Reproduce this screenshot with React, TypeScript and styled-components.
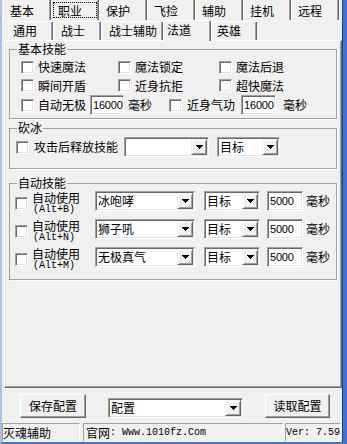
import React from 'react';
import styled, { createGlobalStyle, css } from 'styled-components';

const CJK = `"Noto Sans CJK SC", "Noto Sans CJK JP", sans-serif`;
const MONO = `"Liberation Mono", "DejaVu Sans Mono", monospace`;
const SANS = `"Liberation Sans", Arial, sans-serif`;

const GlobalStyle = createGlobalStyle`
  html, body { margin: 0; padding: 0; background: #f0f0f0; }
  body { font-family: ${CJK}; font-size: 12px; color: #000; }
  *, *::before, *::after { box-sizing: border-box; }
`;

const Window = styled.div`
  width: 347px;
  height: 444px;
  background: #f0f0f0;
  border-left: 2px solid #a9c2ec;
  border-right: 4px solid #3f73d9;
  border-bottom: 2px solid #3f73d9;
  box-shadow: inset -1px 0 0 #1c3f8c;
  display: flex;
  flex-direction: column;
  font-family: ${CJK};
  font-size: 12px;
  line-height: 12px;
  overflow: hidden;
`;

const TopTabs = styled.div`
  display: flex;
  height: 20px;
  padding-left: 1px;
`;

const TopTab = styled.div<{ $focused?: boolean }>`
  width: 48px;
  height: 20px;
  padding: 5px 0 0 6px;
  border-left: 1px solid #fff;
  border-right: 1px solid #696969;
  box-shadow: inset -1px 0 0 #a0a0a0;
  white-space: nowrap;
  ${(p) =>
    p.$focused &&
    css`
      outline: 1px dotted #000;
      outline-offset: -3px;
    `}
`;

const SubTabs = styled.div`
  display: flex;
  align-items: flex-end;
  height: 20px;
  padding-left: 6px;
`;

const SubTab = styled.div<{ $w: number; $pad: number; $active?: boolean }>`
  width: ${(p) => p.$w}px;
  height: 19px;
  padding: 3px 0 0 ${(p) => p.$pad}px;
  border-top: 1px solid #fff;
  border-left: 1px solid #fff;
  border-right: 1px solid #696969;
  box-shadow: inset -1px 0 0 #a0a0a0;
  border-radius: 2px 2px 0 0;
  background: #f0f0f0;
  white-space: nowrap;
  ${(p) =>
    p.$active &&
    css`
      height: 21px;
      margin-bottom: -1px;
      padding-top: 3px;
      position: relative;
      z-index: 1;
    `}
`;

const Panel = styled.div`
  margin-left: 2px;
  width: 338px;
  height: 348px;
  border-top: 1px solid #fff;
  border-left: 1px solid #fff;
  border-right: 1px solid #696969;
  border-bottom: 1px solid #696969;
  box-shadow: inset -1px -1px 0 #a0a0a0;
  padding: 2px 0 0 4px;
  display: flex;
  flex-direction: column;
`;

const Group = styled.fieldset<{ $mt: number }>`
  margin: ${(p) => p.$mt}px 0 0 0;
  padding: 0;
  width: 328px;
  min-width: 0;
  border: 1px solid #a0a0a0;
  box-shadow: 1px 1px 0 #fff;
`;

const Legend = styled.legend`
  margin-left: 7px;
  padding: 0 1px;
  font-size: 12px;
  line-height: 12px;
  height: 12px;
`;

const BasicBody = styled.div`
  padding: 3px 0 3px 11px;
`;

const CheckGrid = styled.div`
  display: grid;
  grid-template-columns: 97px 101px 1fr;
  grid-template-rows: 18px 19px;
`;

const Line = styled.div<{ $h: number }>`
  display: flex;
  align-items: center;
  height: ${(p) => p.$h}px;
`;

const CheckItem = styled.label`
  display: flex;
  align-items: center;
  gap: 4px;
  white-space: nowrap;
`;

const Checkbox = styled.span<{ $ml?: number; $mt?: number }>`
  display: inline-block;
  flex: none;
  width: 13px;
  height: 13px;
  margin-left: ${(p) => p.$ml ?? 0}px;
  margin-top: ${(p) => p.$mt ?? 0}px;
  background: #fff;
  border: 1px solid;
  border-color: #a0a0a0 #fff #fff #a0a0a0;
  box-shadow: inset 1px 1px 0 #696969, inset -1px -1px 0 #e3e3e3;
`;

const Text = styled.span<{ $ml?: number }>`
  margin-left: ${(p) => p.$ml ?? 0}px;
  white-space: nowrap;
  line-height: 12px;
  flex: none;
`;

const Field = styled.div<{ $w: number; $ml?: number }>`
  width: ${(p) => p.$w}px;
  height: 20px;
  margin-left: ${(p) => p.$ml ?? 0}px;
  flex: none;
  background: #fff;
  border: 1px solid;
  border-color: #a0a0a0 #fff #fff #a0a0a0;
  box-shadow: inset 1px 1px 0 #696969, inset -1px -1px 0 #e3e3e3;
  padding-left: 2px;
  display: flex;
  align-items: center;
  font-family: ${SANS};
  font-size: 11px;
  letter-spacing: -0.2px;
`;

const ComboBox = styled.div<{ $w: number; $ml?: number; $mt?: number }>`
  width: ${(p) => p.$w}px;
  height: 20px;
  margin-left: ${(p) => p.$ml ?? 0}px;
  margin-top: ${(p) => p.$mt ?? 0}px;
  flex: none;
  background: #fff;
  border: 1px solid;
  border-color: #a0a0a0 #fff #fff #a0a0a0;
  box-shadow: inset 1px 1px 0 #696969, inset -1px -1px 0 #e3e3e3;
  padding: 1px;
  display: flex;
  align-items: stretch;
`;

const ComboText = styled.div`
  flex: 1;
  padding-left: 1px;
  display: flex;
  align-items: center;
  white-space: nowrap;
  overflow: hidden;
`;

const DropButton = styled.div`
  width: 16px;
  flex: none;
  background: #f0f0f0;
  border: 1px solid;
  border-color: #f0f0f0 #696969 #696969 #f0f0f0;
  box-shadow: inset 1px 1px 0 #fff, inset -1px -1px 0 #a0a0a0;
  display: flex;
  align-items: center;
  justify-content: center;
`;

const Arrow = () => (
  <svg width="7" height="4" viewBox="0 0 7 4" shapeRendering="crispEdges">
    <rect x="0" y="0" width="7" height="1" fill="#000" />
    <rect x="1" y="1" width="5" height="1" fill="#000" />
    <rect x="2" y="2" width="3" height="1" fill="#000" />
    <rect x="3" y="3" width="1" height="1" fill="#000" />
  </svg>
);

const Combo: React.FC<{ w: number; ml?: number; mt?: number; value?: string }> = ({ w, ml, mt, value }) => (
  <ComboBox $w={w} $ml={ml} $mt={mt}>
    <ComboText>{value}</ComboText>
    <DropButton>
      <Arrow />
    </DropButton>
  </ComboBox>
);

const IceBody = styled.div`
  padding: 3px 0 11px 6px;
`;

const AutoBody = styled.div`
  padding: 2px 0 12px 5px;
  display: flex;
  flex-direction: column;
  gap: 8px;
`;

const AutoRow = styled.div`
  display: flex;
  align-items: flex-start;
  height: 20px;
`;

const HotkeyLabel = styled.div`
  margin-left: 4px;
  width: 47px;
  flex: none;
  display: flex;
  flex-direction: column;
`;

const HotkeyTitle = styled.span`
  line-height: 14px;
  height: 14px;
  white-space: nowrap;
`;

const Hotkey = styled.span`
  font-family: ${MONO};
  font-size: 10px;
  line-height: 9px;
  height: 9px;
  padding-left: 1px;
  white-space: nowrap;
`;

const AutoUnit = styled.span`
  margin-left: 3px;
  align-self: center;
  white-space: nowrap;
`;

const BottomBar = styled.div`
  height: 34px;
  display: flex;
  align-items: flex-start;
  padding: 6px 0 0 18px;
`;

const PushButton = styled.div<{ $w: number; $ml?: number }>`
  width: ${(p) => p.$w}px;
  height: 24px;
  margin-left: ${(p) => p.$ml ?? 0}px;
  flex: none;
  background: #f0f0f0;
  border: 1px solid;
  border-color: #fff #696969 #696969 #fff;
  box-shadow: inset -1px -1px 0 #a0a0a0;
  display: flex;
  align-items: center;
  justify-content: center;
  white-space: nowrap;
`;

const StatusBar = styled.div`
  height: 20px;
  display: flex;
  padding-top: 1px;
`;

const StatusPane = styled.div<{ $w: number; $ml?: number; $pad?: number }>`
  width: ${(p) => p.$w}px;
  height: 19px;
  margin-left: ${(p) => p.$ml ?? 0}px;
  padding-left: ${(p) => p.$pad ?? 0}px;
  border: 1px solid;
  border-color: #a0a0a0 #fff #fff #a0a0a0;
  display: flex;
  align-items: center;
  white-space: nowrap;
  overflow: hidden;
`;

const Mono = styled.span`
  font-family: ${MONO};
  font-size: 10px;
  line-height: 12px;
`;

const topTabs = ['基本', '职业', '保护', '飞捡', '辅助', '挂机', '远程'];
const subTabs: { label: string; w: number; pad: number; active?: boolean }[] = [
  { label: '通用', w: 45, pad: 4 },
  { label: '战士', w: 48, pad: 7 },
  { label: '战士辅助', w: 62, pad: 7 },
  { label: '法道', w: 48, pad: 3, active: true },
  { label: '英雄', w: 46, pad: 5 },
];

const autoRows = [
  { key: '(Alt+B)', skill: '冰咆哮' },
  { key: '(Alt+N)', skill: '狮子吼' },
  { key: '(Alt+M)', skill: '无极真气' },
];

export default function App() {
  return (
    <>
      <GlobalStyle />
      <Window>
        <TopTabs>
          {topTabs.map((t) => (
            <TopTab key={t} $focused={t === '职业'}>
              {t}
            </TopTab>
          ))}
        </TopTabs>
        <SubTabs>
          {subTabs.map((t) => (
            <SubTab key={t.label} $w={t.w} $pad={t.pad} $active={t.active}>
              {t.label}
            </SubTab>
          ))}
        </SubTabs>
        <Panel>
          <Group $mt={0}>
            <Legend>基本技能</Legend>
            <BasicBody>
              <CheckGrid>
                <CheckItem><Checkbox />快速魔法</CheckItem>
                <CheckItem><Checkbox />魔法锁定</CheckItem>
                <CheckItem><Checkbox />魔法后退</CheckItem>
                <CheckItem><Checkbox />瞬间开盾</CheckItem>
                <CheckItem><Checkbox />近身抗拒</CheckItem>
                <CheckItem><Checkbox />超快魔法</CheckItem>
              </CheckGrid>
              <Line $h={20}>
                <Checkbox />
                <Text $ml={4}>自动无极</Text>
                <Field $w={34} $ml={4}>16000</Field>
                <Text $ml={4}>毫秒</Text>
                <Checkbox $ml={17} />
                <Text $ml={5}>近身气功</Text>
                <Field $w={35} $ml={6}>16000</Field>
                <Text $ml={7}>毫秒</Text>
              </Line>
            </BasicBody>
          </Group>
          <Group $mt={3}>
            <Legend>砍冰</Legend>
            <IceBody>
              <Line $h={20}>
                <Checkbox />
                <Text $ml={5}>攻击后释放技能</Text>
                <Combo w={85} ml={6} />
                <Combo w={63} ml={8} value="目标" />
              </Line>
            </IceBody>
          </Group>
          <Group $mt={8}>
            <Legend>自动技能</Legend>
            <AutoBody>
              {autoRows.map((r) => (
                <AutoRow key={r.key}>
                  <Checkbox $mt={6} />
                  <HotkeyLabel>
                    <HotkeyTitle>自动使用</HotkeyTitle>
                    <Hotkey>{r.key}</Hotkey>
                  </HotkeyLabel>
                  <Combo w={100} ml={16} value={r.skill} />
                  <Combo w={56} ml={9} value="目标" />
                  <Field $w={36} $ml={7}>5000</Field>
                  <AutoUnit>毫秒</AutoUnit>
                </AutoRow>
              ))}
            </AutoBody>
          </Group>
        </Panel>
        <BottomBar>
          <PushButton $w={66}>保存配置</PushButton>
          <Combo w={135} ml={22} mt={4} value="配置" />
          <PushButton $w={65} $ml={22}>读取配置</PushButton>
        </BottomBar>
        <StatusBar>
          <StatusPane $w={78}>灭魂辅助</StatusPane>
          <StatusPane $w={200} $ml={3} $pad={2}>
            官网<Mono>: Www.1010fz.Com</Mono>
          </StatusPane>
          <StatusPane $w={56} $ml={2}>
            <Mono>Ver: 7.59</Mono>
          </StatusPane>
        </StatusBar>
      </Window>
    </>
  );
}
